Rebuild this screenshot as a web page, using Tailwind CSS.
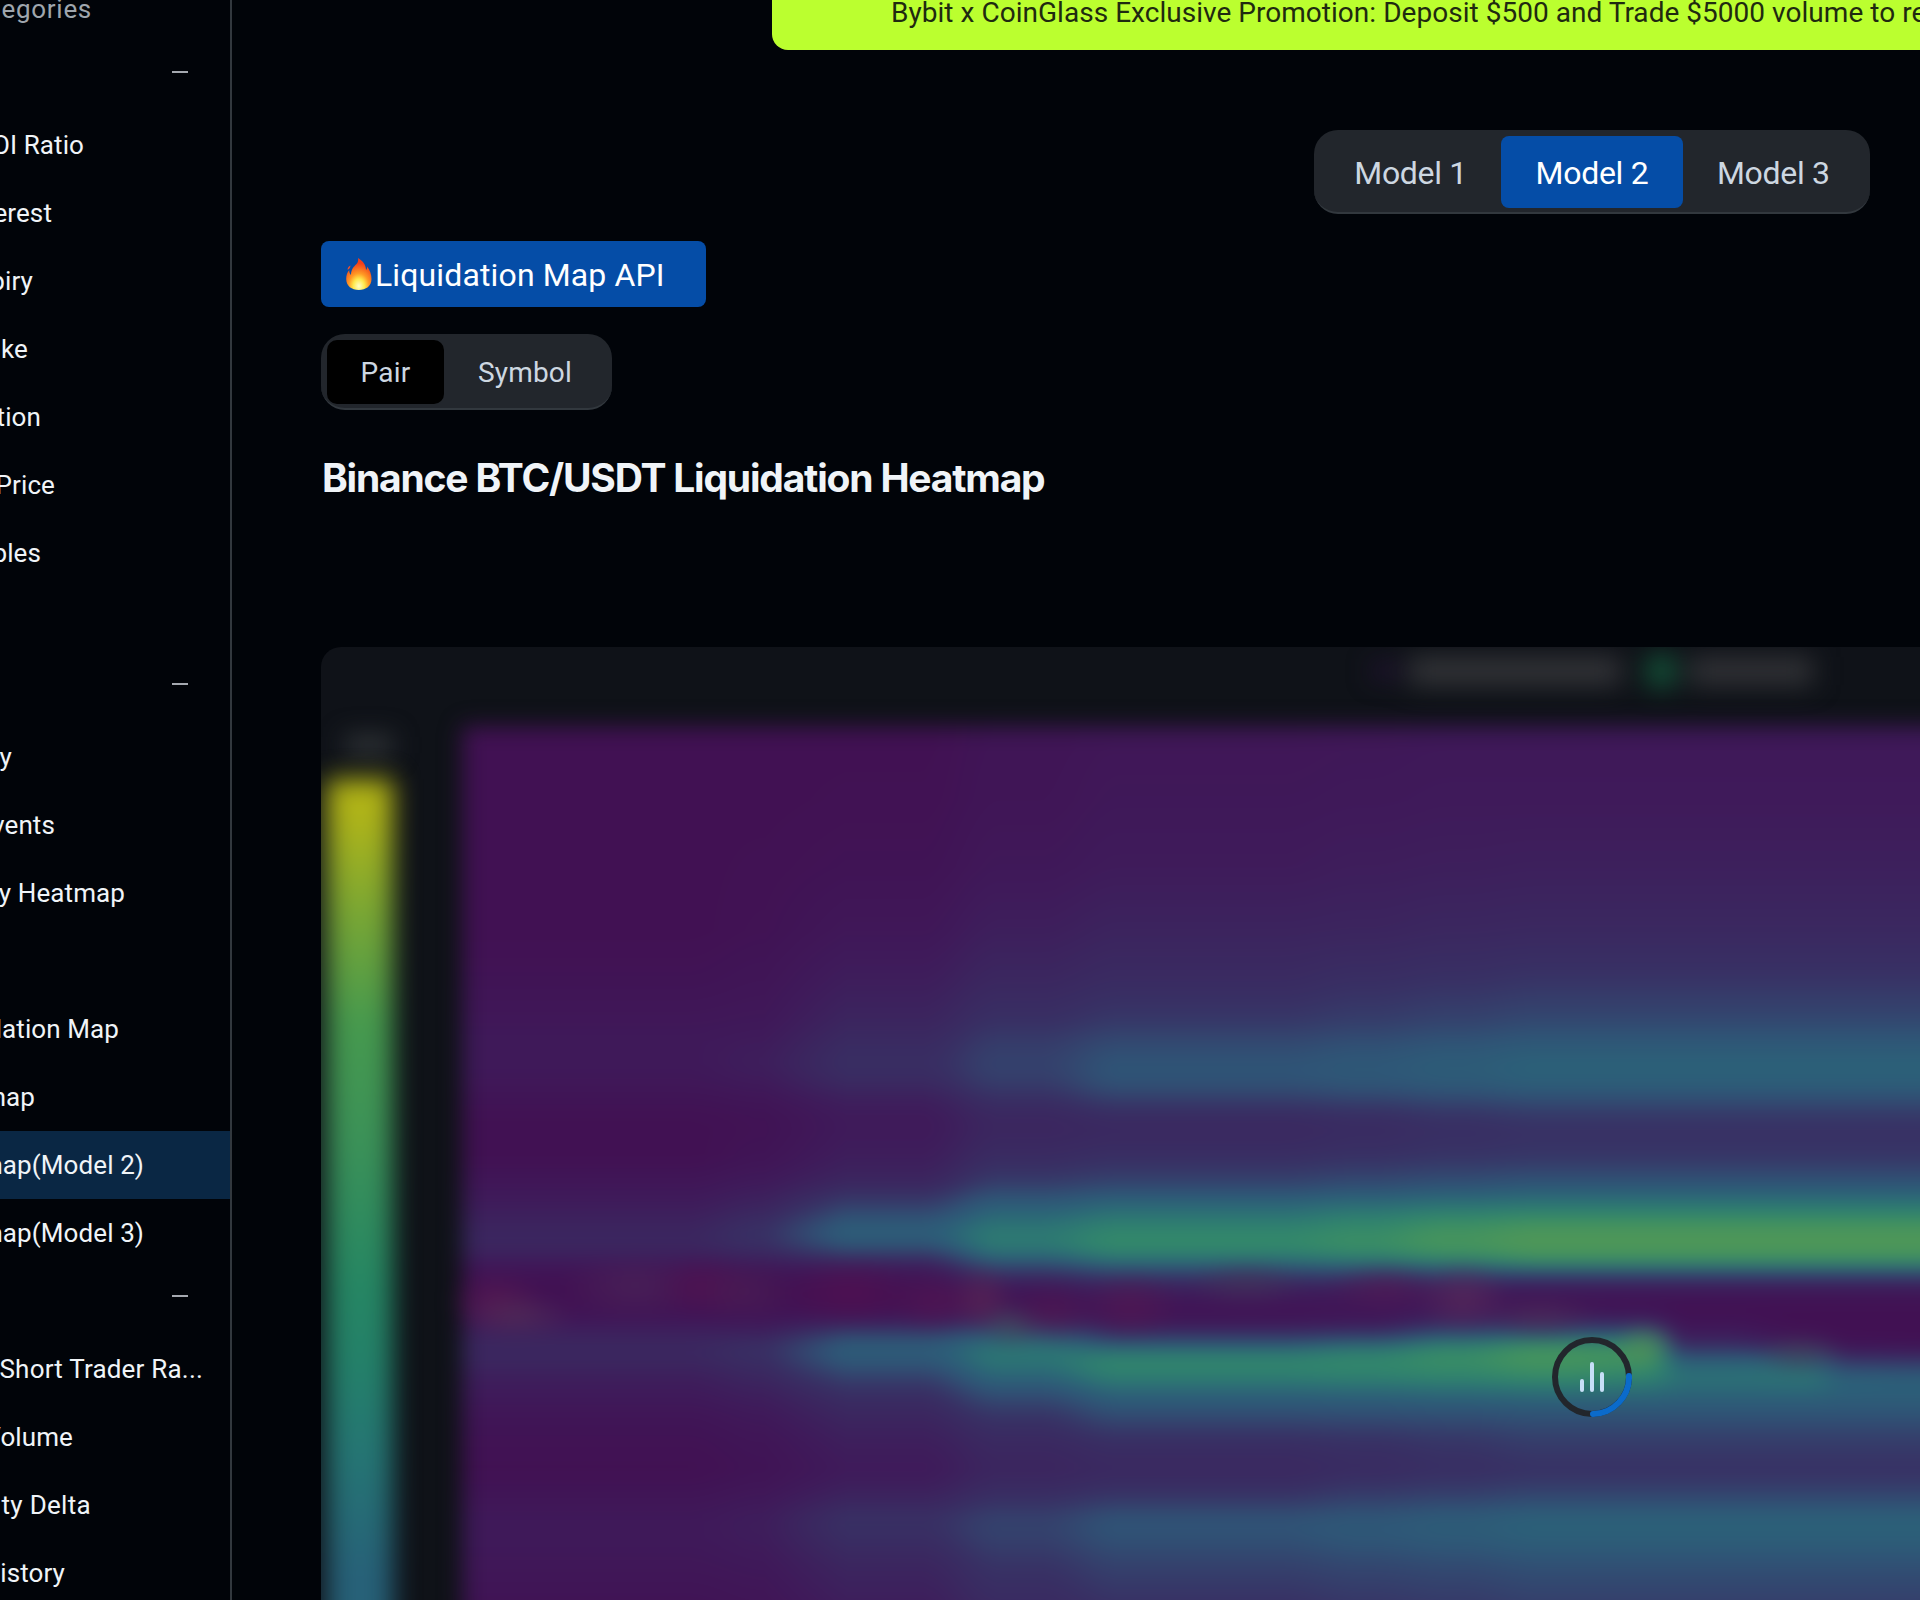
<!DOCTYPE html>
<html lang="en">
<head>
<meta charset="utf-8">
<title>Liquidation Heatmap</title>
<script src="https://cdn.jsdelivr.net/npm/@tailwindcss/browser@4"></script>
</head>
<body class="w-[1920px] h-[1600px] overflow-hidden bg-[#010409] font-[Roboto,sans-serif] text-[#f0f4f8]">
<div class="flex h-[1600px] w-[1920px] overflow-hidden">
  <aside class="w-[232px] shrink-0 overflow-hidden border-r-2 border-[#32383e] text-[26px] tracking-[0.1px]">
    <nav class="-mt-[25px] flex flex-col whitespace-nowrap">
      <div class="flex h-[68px] w-[92px] items-center justify-end self-start tracking-[0.7px] text-[#9fa6ad]"><span>egories</span></div>
      <div class="flex h-[68px] items-center justify-end pr-[42px] pb-[10px]"><i class="h-[2px] w-4 bg-[#a5a9b0]"></i></div>
      <div class="flex h-[68px] w-[84px] items-center justify-end"><span>OI Ratio</span></div>
      <div class="flex h-[68px] w-[52px] items-center justify-end"><span>erest</span></div>
      <div class="flex h-[68px] w-[33px] items-center justify-end"><span>piry</span></div>
      <div class="flex h-[68px] w-[28px] items-center justify-end"><span>ke</span></div>
      <div class="flex h-[68px] w-[41px] items-center justify-end"><span>tion</span></div>
      <div class="flex h-[68px] w-[55px] items-center justify-end"><span>Price</span></div>
      <div class="flex h-[68px] w-[41px] items-center justify-end"><span>bles</span></div>
      <div class="h-[68px]"></div>
      <div class="flex h-[68px] items-center justify-end pr-[42px] pb-[10px]"><i class="h-[2px] w-4 bg-[#a5a9b0]"></i></div>
      <div class="flex h-[68px] w-[12px] items-center justify-end"><span>y</span></div>
      <div class="flex h-[68px] w-[55px] items-center justify-end"><span>vents</span></div>
      <div class="flex h-[68px] w-[125px] items-center justify-end"><span>y Heatmap</span></div>
      <div class="h-[68px]"></div>
      <div class="flex h-[68px] w-[119px] items-center justify-end"><span>dation Map</span></div>
      <div class="flex h-[68px] w-[35px] items-center justify-end"><span>map</span></div>
      <div class="h-[68px] bg-[#0a2744]"><div class="flex h-full w-[144px] items-center justify-end"><span>map(Model 2)</span></div></div>
      <div class="flex h-[68px] w-[144px] items-center justify-end"><span>map(Model 3)</span></div>
      <div class="flex h-[68px] items-center justify-end pr-[42px] pb-[10px]"><i class="h-[2px] w-4 bg-[#a5a9b0]"></i></div>
      <div class="flex h-[68px] w-[203px] items-center justify-end tracking-[0.2px]"><span>Short Trader Ra...</span></div>
      <div class="flex h-[68px] w-[73px] items-center justify-end"><span>Volume</span></div>
      <div class="flex h-[68px] w-[91px] items-center justify-end tracking-[0.3px]"><span>ty Delta</span></div>
      <div class="flex h-[68px] w-[65px] items-center justify-end"><span>istory</span></div>
    </nav>
  </aside>

  <main class="flex min-w-0 flex-1 flex-col overflow-hidden">
    <div class="ml-[540px] flex h-[50px] items-start overflow-hidden rounded-bl-2xl bg-[#bbff2f] pt-px pl-[119px] text-[28px] leading-[24px] tracking-[0.03px] whitespace-nowrap text-[#1f2a10]"><span>Bybit x CoinGlass Exclusive Promotion: Deposit $500 and Trade $5000 volume to receive</span></div>

    <div class="mt-20 ml-[1082px] flex h-[84px] w-[556px] rounded-3xl border-b-2 border-[#32383e] bg-[#22262c] px-1.5 pt-1.5 pb-1 text-[32px] tracking-[-0.3px] text-[#cdd7e1]">
      <div class="flex flex-1 items-center justify-center pt-0.5">Model 1</div>
      <div class="flex flex-1 items-center justify-center rounded-lg bg-[#054da7] pt-0.5 text-white">Model 2</div>
      <div class="flex flex-1 items-center justify-center pt-0.5">Model 3</div>
    </div>

    <div class="mt-[27px] ml-[89px] flex h-[66px] w-[385px] items-center rounded-lg bg-[#054da7] pt-0.5 pl-[25px] text-[32px] tracking-[0.13px] text-white">
      <svg class="-mt-0.5 h-8 w-[26px]" viewBox="0 0 26 32"><defs><radialGradient id="fire" cx=".5" cy=".88" r=".8"><stop offset="0" stop-color="#ffffc8"/><stop offset=".28" stop-color="#ffe84c"/><stop offset=".5" stop-color="#ff9a24"/><stop offset=".9" stop-color="#f13f1c"/></radialGradient></defs><path fill="url(#fire)" d="M12 0c5 3 8 7 8 12 1-1 1.200-1.600 1-3.500 3 3.500 4.500 8 4.500 12.500C25.500 28 20 32 12.800 32S.300 28 .200 21C.1 17 1.500 14 3.200 12 3.200 14 3.800 16 5 17 5 11.500 7.500 9 10.500 6c1.500-1.600 2-3.600 1.500-6Z"/><path fill="#f8502a" d="M4.400 7.500C3 8.200 1.600 9.700 1.600 11.800c1.500-.7 2.800-2.200 2.800-4.300Z"/></svg>
      <span class="ml-[3px]">Liquidation Map API</span>
    </div>

    <div class="mt-[27px] ml-[89px] flex h-[76px] w-[291px] rounded-3xl border-b-2 border-[#32383e] bg-[#22262c] px-1.5 pt-1.5 pb-1 text-[28px] tracking-[0.2px] text-[#cdd7e1]">
      <div class="flex w-[117px] items-center justify-center rounded-[10px] bg-black pt-0.5">Pair</div>
      <div class="flex flex-1 items-center justify-center pt-0.5">Symbol</div>
    </div>

    <h1 class="mt-11 ml-[90px] h-12 font-[Inter,sans-serif] text-[39px] leading-[48px] font-bold tracking-[-1.2px] whitespace-nowrap">Binance BTC/USDT Liquidation Heatmap</h1>

    <section class="relative mt-[145px] ml-[89px] h-[953px] overflow-hidden rounded-tl-[20px] bg-[#0f1218]">
      <div class="absolute top-[16px] left-[1052px] flex h-[16px] items-center blur-[13px]">
        <i class="h-3 w-6 bg-[#2b1440]"></i>
        <i class="ml-3 h-7 w-[212px] bg-[#343539]"></i>
        <i class="ml-[26px] h-8 w-7 rounded bg-[#14553a]"></i>
        <i class="ml-[14px] h-7 w-[124px] bg-[#323337]"></i>
      </div>
      <div class="absolute top-[88px] left-[24px] h-5 w-[48px] bg-[#303437] blur-[12px]"></div>
      <div class="absolute top-[132px] left-[6px] h-[880px] w-[66px] bg-[linear-gradient(#b4b414_0px,#adb31a_40px,#79a634_134px,#46994e_244px,#3b9158_364px,#268663_504px,#248069_584px,#257573_674px,#276178_794px)] blur-[13px]"></div>
      <canvas id="heat" width="1640" height="990" class="absolute top-0 left-0 max-w-none blur-[8px]"></canvas>
      <svg class="absolute top-[690px] left-[1231px] h-20 w-20" viewBox="0 0 80 80" fill="none" stroke-linecap="round">
        <circle cx="40" cy="40" r="37" stroke="#22262c" stroke-width="6"/>
        <path d="M77 39A37 37 0 0 1 41 77" stroke="#0b6bcb" stroke-width="6"/>
        <path d="M30 44v9M40 27v26M50 37v16" stroke="#c7dff7" stroke-width="4"/>
      </svg>
    </section>
  </main>
</div>

<script>
// Dimmed viridis palette, low to high liquidation leverage.
const palette = ["#411153","#3f1a5a","#3b265f","#383064","#34426d","#2f5476","#2c5f78","#2c7474","#31866c","#42925f","#509757"]
  .map(h => [1, 3, 5].map(i => parseInt(h.slice(i, i + 2), 16)));
const knots = [463, 765, 845, 1000, 1120, 1360, 1450, 1540, 1640, 1688, 1805, 1850, 1920];
// Each row: y, then the level at each knot; missing trailing levels repeat the last one.
const rows = [
  [640, 0,0,0,.4,.6,.7,.8],
  [735, 0,0,0,.4,.6,.7,.8],
  [800, 0,0,.1,.5,.8,.9,1],
  [867, 0,.1,.3,.8,1.1,1.3,1.4,1.5],
  [930, 0,.2,.7,1.4,1.8,1.9,2.1,2.2],
  [980, .3,.5,1.3,2.1,2.5,2.8,3,3.200],
  [1020, .7,.8,1.9,2.9,3.4,3.7,4,4.3],
  [1040, .9,1.1,2.4,3.600,4.3,4.600,4.900,5.200],
  [1063, .9,1.400,2.8,4,5,5.300,5.700,6.1],
  [1082, .7,1,2.4,3.700,4.900,5.200,5.500,5.900],
  [1097, .4,.6,1.5,2.900,3.900,4.200,4.500,4.800],
  [1112, .1,.3,1.1,2.200,2.700,2.900,3.300,3.600],
  [1129, 0,.2,1,2,2.200,2.500,2.800,3],
  [1157, 0,.4,1.300,2.500,2.800,3,3.200,3.300],
  [1182, .6,1,2,3.600,4,4.400,4.700,5],
  [1202, 1.100,1.700,3.600,5.500,6.100,6.400,6.700,6.900],
  [1215, 1.500,2.300,4.700,6.400,7,7.500,7.900,8.100],
  [1228, 1.900,3,5.800,7.1,7.800,8.200,8.900,9.500],
  [1241, 2.1,3,5.600,7.400,8.300,8.700,9.400,10],
  [1253, 1.700,2.200,3.700,6.700,7.700,8.1,8.800,9.500],
  [1263, .8,1.1,1.800,5,6.200,6.600,7.100,7.900],
  [1273, .3,.3,.6,3,4,4.200,4.300,4.600],
  [1283, 0,0,.2,1.3,2.1,2.1,2,1.900],
  [1294, 0,0,0,.3,1,.8,.7,.4],
  [1310, .2,.2,.1,.6,.3,.5,.8,.5,.3,0],
  [1322, .8,.7,1.500,2.6,.7,.8,2,2.200,2,.4,0],
  [1335, 1.800,1.900,4.400,5.600,3.2,3.700,5.300,6,6,1.2,.2,0,0],
  [1347, 2.100,3,5.700,6.900,6.200,7,8,8.900,8.700,3,1.900,.6,.4],
  [1360, 2.1,2.700,5.400,7.1,8.1,8.2,8.600,9.3,9,6,6,3.300,3.2],
  [1378, 1.300,2,3.800,6.1,7.400,7.600,7.800,8.1,7.700,6.900,7,6.100,5.900],
  [1395, 1,1.400,2.700,4.600,5.900,6,6.200,6.400,6.300,6.100,6.100,5.900,5.900],
  [1415, .5,.9,2,3.200,4.500,4.600,4.700,4.900],
  [1440, .2,.5,1.400,2.300,2.800,3,3.300,3.700],
  [1470, 0,.3,1,1.900,2.200,2.500,2.800,3],
  [1492, .4,.7,1.600,2.600,3,3.500,3.700,4],
  [1520, .9,1.300,3,4,5,5.300,5.700,6.1],
  [1538, .9,1.200,2.700,3.900,4.800,5.200,5.500,5.900],
  [1563, .7,.9,2,3.200,4,4.300,4.500,4.800],
  [1600, .3,.5,1.400,2.500,3.100,3.400,3.600,3.900],
  [1640, .1,.3,1,2,2.5,3,3,3.2]
];
const ss = t => { t = Math.max(0, Math.min(1, t)); return t * t * (3 - 2 * t); };
const W = 1640, H = 990, X0 = 321, Y0 = 647;
const cx = document.getElementById("heat").getContext("2d");
const img = cx.createImageData(W, H);
const lines = rows.map(r => {
  const v = knots.map((_, i) => r[Math.min(i + 1, r.length - 1)]);
  const out = new Float32Array(W);
  for (let x = 0; x < W; x++) {
    const px = x + X0;
    let k = 0;
    while (k < knots.length - 2 && px > knots[k + 1]) k++;
    const span = knots[k + 1] - knots[k], ramp = Math.min(span, 80);
    const t = (px - knots[k + 1] + ramp) / ramp;
    out[x] = v[k] + (v[k + 1] - v[k]) * (k === 1 ? Math.max(0, Math.min(1, t)) : ss(t));
  }
  return out;
});
for (let y = 0, k = 0; y < H; y++) {
  const py = y + Y0;
  while (k < rows.length - 2 && py > rows[k + 1][0]) k++;
  const f = Math.min(1, (py - rows[k][0]) / (rows[k + 1][0] - rows[k][0]));
  const ay = ss((py - 710) / 32);
  for (let x = 0; x < W; x++) {
    const t = Math.min(9.999, lines[k][x] * (1 - f) + lines[k + 1][x] * f);
    const i = Math.floor(t), g = t - i, o = (y * W + x) * 4;
    for (let c = 0; c < 3; c++) img.data[o + c] = palette[i][c] * (1 - g) + palette[i + 1][c] * g;
    img.data[o + 3] = 255 * ay * ss((x + X0 - 446) / 32);
  }
}
cx.putImageData(img, 0, 0);
// Price line traces: x, y, rx, ry, colour
[[496,1302,48,32,"88,26,80"],[518,1316,58,24,"80,46,88"],[635,1287,75,34,"74,36,88"],[704,1286,50,32,"82,18,80"],[745,1292,55,32,"74,30,84"],[851,1292,70,36,"82,16,80"],[935,1302,48,32,"82,22,82"],
 [982,1300,34,38,"90,38,84"],[1012,1326,34,24,"68,72,90"],[1052,1314,46,32,"80,22,80"],[1130,1306,52,36,"82,24,82"],[1246,1283,60,24,"66,50,88"],[1385,1288,60,26,"80,26,84"],[1463,1298,48,38,"88,42,90"],[1540,1318,60,24,"76,44,88"],[1645,1346,34,24,"84,140,84"],[1800,1354,48,22,"66,66,90"]]
.forEach(([x, y, rx, ry, c]) => {
  cx.save(); cx.translate(x - X0, y - Y0); cx.scale(rx, ry);
  const g = cx.createRadialGradient(0, 0, 0, 0, 0, 1);
  g.addColorStop(0, `rgba(${c},.75)`); g.addColorStop(.5, `rgba(${c},.38)`); g.addColorStop(1, `rgba(${c},0)`);
  cx.fillStyle = g; cx.fillRect(-1, -1, 2, 2); cx.restore();
});
</script>
</body>
</html>
